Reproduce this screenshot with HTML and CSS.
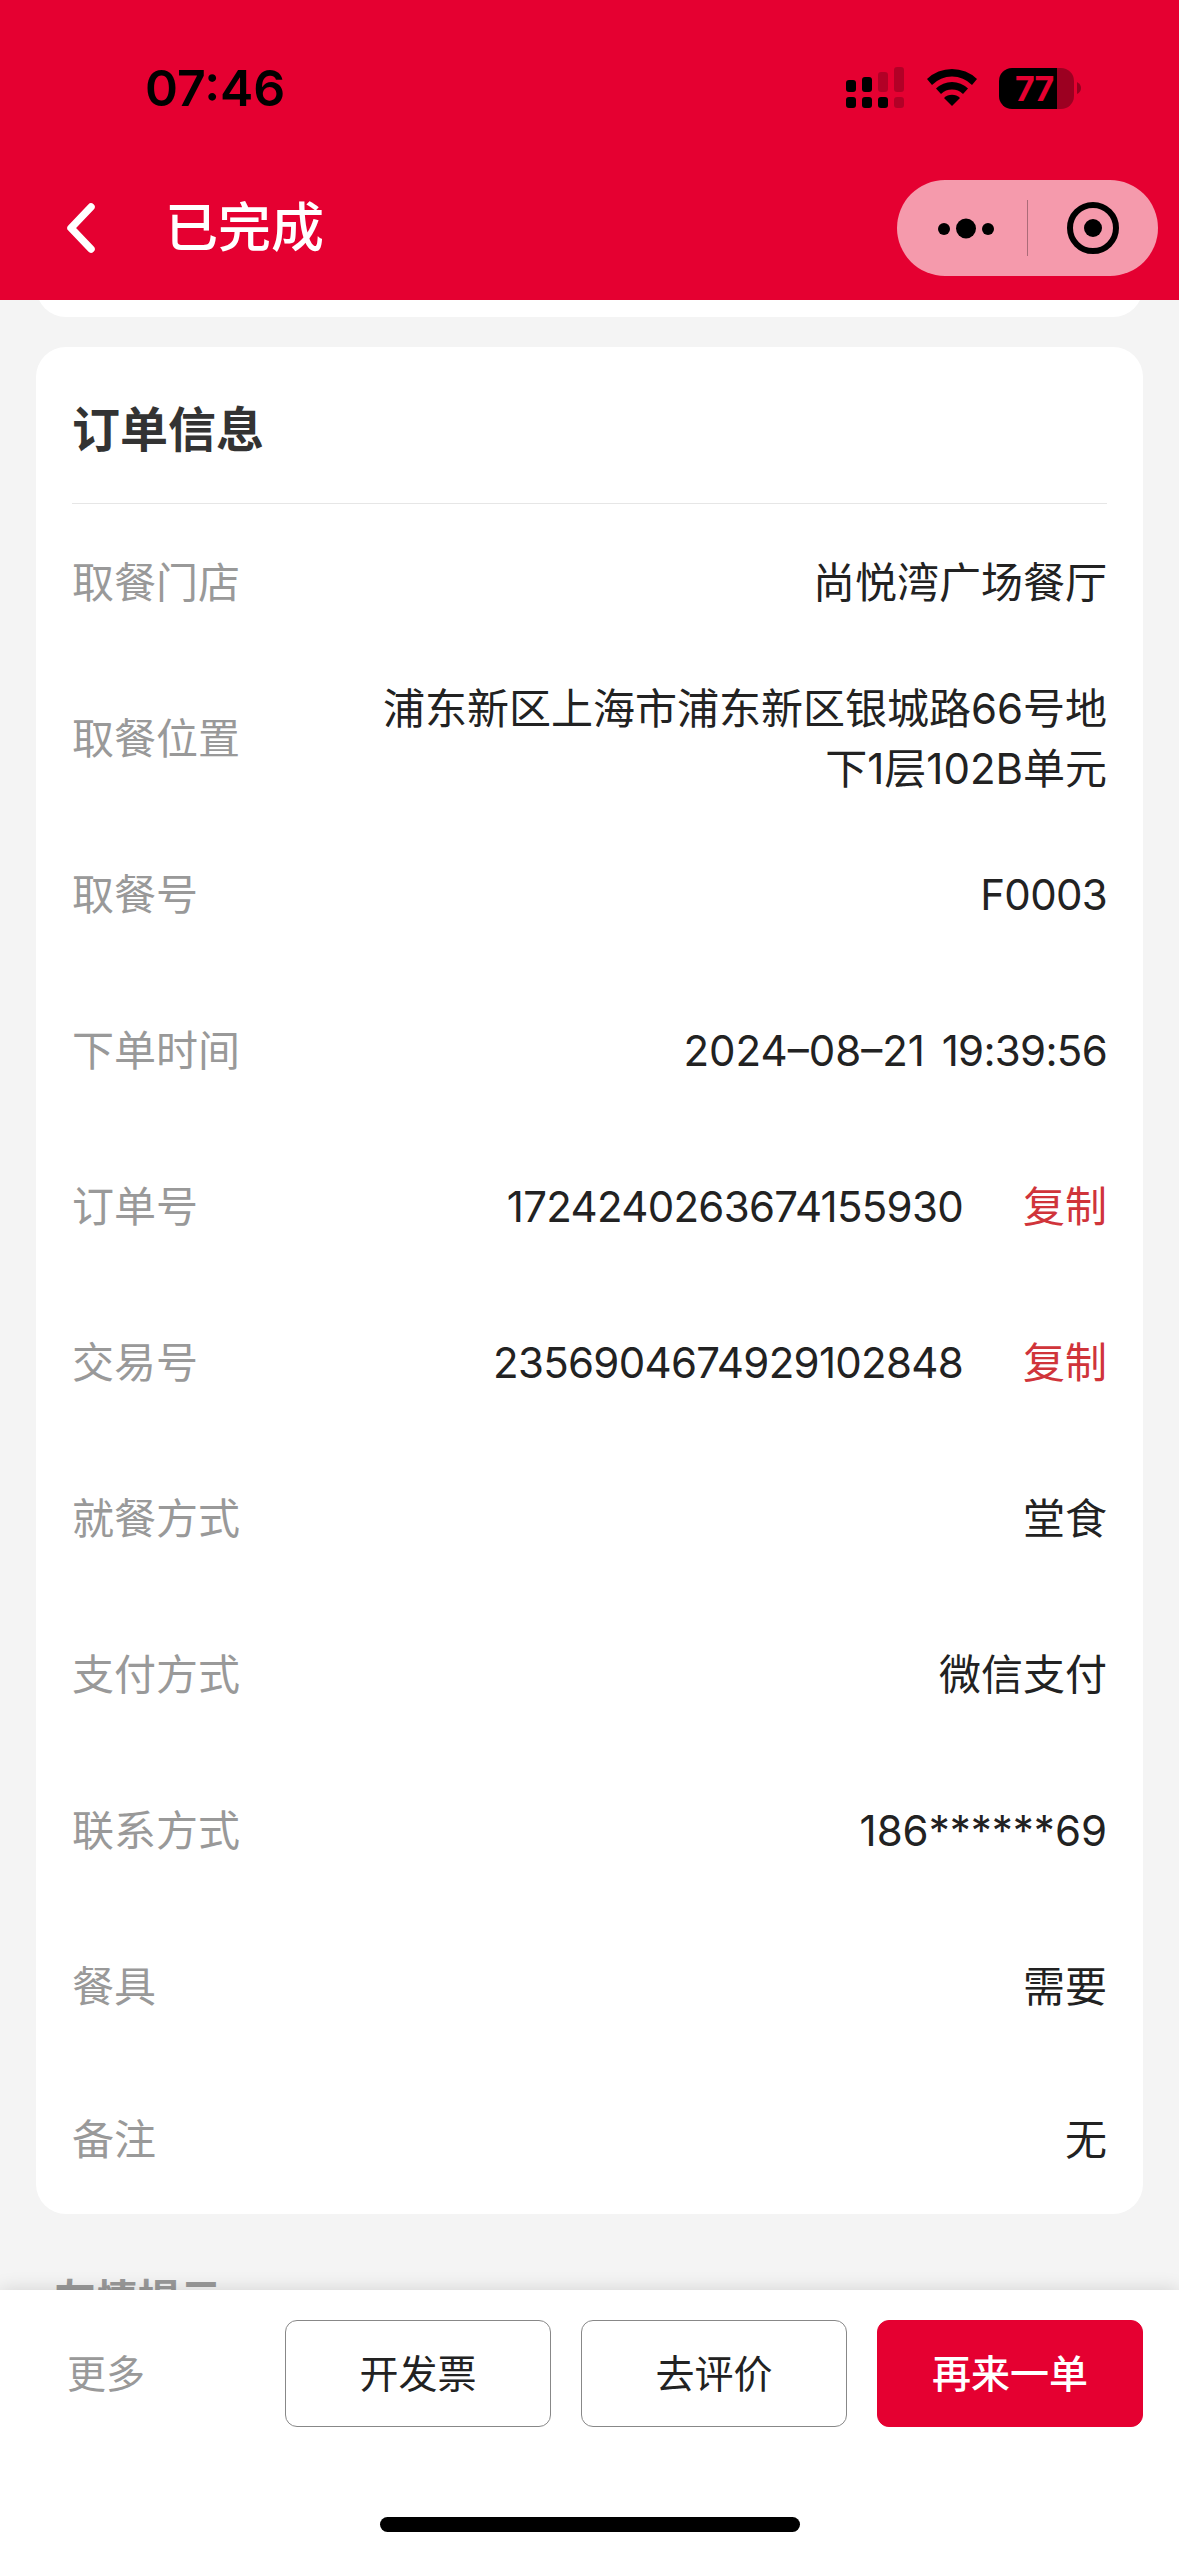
FILE: index.html
```html
<!DOCTYPE html>
<html lang="zh-CN">
<head>
<meta charset="utf-8">
<title>已完成</title>
<link rel="stylesheet" href="styles.css">
</head>
<body>
<div class="page">
  <header class="header">
    <div class="statusbar">
      <span class="time">07:46</span>
      <div class="status-icons">
        <svg class="signal" width="58" height="42" viewBox="0 0 58 42">
          <rect x="0" y="13" width="10" height="12" rx="3"/>
          <rect x="16" y="10" width="10" height="15" rx="3"/>
          <rect x="32" y="5" width="10" height="20" rx="3" opacity=".22"/>
          <rect x="48" y="0" width="10" height="25" rx="3" opacity=".22"/>
          <rect x="0" y="30" width="10" height="11" rx="3"/>
          <rect x="16" y="30" width="10" height="11" rx="3"/>
          <rect x="32" y="30" width="10" height="11" rx="3"/>
          <rect x="48" y="30" width="10" height="11" rx="3" opacity=".22"/>
        </svg>
        <svg class="wifi" width="52" height="42" viewBox="0 0 52 42">
          <path d="M1 12 A36 36 0 0 1 51 12 L46 18 A28 28 0 0 0 6 18 Z"/>
          <path d="M10 21.500 A23 23 0 0 1 42 21.500 L37 27 A16 16 0 0 0 15 27 Z"/>
          <path d="M18 31 A11.500 11.500 0 0 1 34 31 L26 39 Z"/>
        </svg>
        <div class="battery">
          <div class="battery-body">77</div>
          <svg width="5" height="14" viewBox="0 0 5 14"><path d="M0 1 Q4 3 4 7 Q4 11 0 13 Z" opacity=".35"/></svg>
        </div>
      </div>
    </div>
    <div class="navbar">
      <svg class="back" width="36" height="60" viewBox="0 0 36 60">
        <path d="M29 9 L9 30 L29 51" fill="none" stroke="#fff" stroke-width="7.500" stroke-linecap="round" stroke-linejoin="round"/>
      </svg>
      <h1 class="title">已完成</h1>
      <div class="capsule">
        <svg width="261" height="96" viewBox="0 0 261 96">
          <circle cx="47" cy="49" r="6"/>
          <circle cx="69" cy="48.500" r="10"/>
          <circle cx="91" cy="49" r="6"/>
          <rect x="130" y="20" width="1" height="56" opacity=".3"/>
          <circle cx="196" cy="48" r="23" fill="none" stroke="#000" stroke-width="6"/>
          <circle cx="196" cy="48" r="9"/>
        </svg>
      </div>
    </div>
  </header>

  <main class="content">
    <div class="card card-prev"></div>
    <section class="card order">
      <h2 class="card-title">订单信息</h2>
      <div class="row"><span class="label">取餐门店</span><span class="value">尚悦湾广场餐厅</span></div>
      <div class="row"><span class="label">取餐位置</span><span class="value">浦东新区上海市浦东新区银城路66号地<br>下1层102B单元</span></div>
      <div class="row"><span class="label">取餐号</span><span class="value num">F0003</span></div>
      <div class="row"><span class="label">下单时间</span><span class="value">2024–08–21 <span class="num clock">19:39:56</span></span></div>
      <div class="row"><span class="label">订单号</span><span class="value num">1724240263674155930</span><a class="copy">复制</a></div>
      <div class="row"><span class="label">交易号</span><span class="value num">2356904674929102848</span><a class="copy">复制</a></div>
      <div class="row"><span class="label">就餐方式</span><span class="value">堂食</span></div>
      <div class="row"><span class="label">支付方式</span><span class="value">微信支付</span></div>
      <div class="row"><span class="label">联系方式</span><span class="value">186******69</span></div>
      <div class="row"><span class="label">餐具</span><span class="value">需要</span></div>
      <div class="row row-last"><span class="label">备注</span><span class="value">无</span></div>
    </section>
    <h3 class="tips">友情提示</h3>
  </main>

  <footer class="footer">
    <div class="actions">
      <span class="more">更多</span>
      <button class="btn">开发票</button>
      <button class="btn">去评价</button>
      <button class="btn btn-primary">再来一单</button>
    </div>
    <div class="home-indicator"></div>
  </footer>
</div>
</body>
</html>
```
FILE: styles.css
```css
* {
    box-sizing: border-box;
}

body {
    margin: 0;
    background: #f4f4f4;
    font-family: Inter, "Noto Sans CJK SC", sans-serif;
    color: #222;
}

.page {
    display: flex;
    flex-direction: column;
    width: 1179px;
    height: 2556px;
    overflow: hidden;
}

/* header */
.header {
    flex: none;
    height: 300px;
    background: #e50031;
}

.statusbar {
    display: flex;
    justify-content: space-between;
    height: 176px;
    padding: 0 97px 0 145px;
}

.time {
    height: 176px;
    line-height: 176px;
    font-size: 50px;
    font-weight: 600;
    color: #000;
}

.status-icons {
    display: flex;
    align-items: center;
    height: 176px;
}

.wifi {
    margin-left: 22px;
}

.battery {
    display: flex;
    align-items: center;
    gap: 3px;
    margin-left: 21px;
}

.battery-body {
    width: 75px;
    height: 41px;
    padding-left: 16px;
    border-radius: 13px;
    background: linear-gradient(to right, #000 58px, #9c0021 58px);
    font-size: 34px;
    font-weight: 700;
    line-height: 41px;
    letter-spacing: -1px;
    color: #e50031;
}

.navbar {
    display: flex;
    align-items: center;
    height: 104px;
    padding: 0 21px 0 62px;
}

.title {
    flex: 1;
    margin: 0 0 0 67px;
    font-size: 53px;
    font-weight: 500;
    line-height: 72px;
    color: #fff;
}

.capsule {
    height: 96px;
    border-radius: 48px;
    background: #f59aac;
}

.capsule svg {
    display: block;
}

/* order info */
.content {
    flex: 1;
    min-height: 0;
    padding: 0 36px;
    overflow: hidden;
}

.card {
    padding: 0 36px;
    border-radius: 30px;
    background: #fff;
}

.card-prev {
    height: 60px;
    margin-top: -43px;
    margin-bottom: 30px;
}

.card-title {
    height: 157px;
    margin: 0;
    border-bottom: 1px solid #e6e6e6;
    font-size: 48px;
    font-weight: 700;
    line-height: 165px;
    color: #333;
}

.row {
    display: flex;
    align-items: center;
    height: 156px;
    padding-top: 2px;
    font-size: 42px;
    line-height: 60px;
}

.row-last {
    height: 150px;
}

.label {
    color: #999;
}

.value {
    flex: 1;
    text-align: right;
    white-space: nowrap;
}

.num {
    letter-spacing: -.7px;
}

.clock {
    margin-left: 5px;
}

.copy {
    margin-left: 60px;
    color: #d0343a;
}

.tips {
    margin: 56px 0 0 18px;
    font-size: 42px;
    font-weight: 700;
    line-height: 60px;
    color: #999;
}

/* bottom bar */
.footer {
    flex: none;
    position: relative;
    height: 266px;
    padding: 30px 36px 0;
    background: #fff;
    box-shadow: 0 0 18px rgba(0, 0, 0, .14);
}

.actions {
    display: flex;
    gap: 30px;
}

.more {
    flex: 1;
    padding-left: 31px;
    font-size: 39px;
    line-height: 107px;
    color: #999;
}

.btn {
    width: 266px;
    height: 107px;
    padding: 0 0 5px;
    border: 1px solid #888;
    border-radius: 12px;
    background: #fff;
    font-family: inherit;
    font-size: 39px;
    color: #222;
}

.btn-primary {
    border-color: #e50031;
    background: #e50031;
    font-weight: 500;
    color: #fff;
}

.home-indicator {
    width: 420px;
    height: 15px;
    margin: 90px auto 0;
    border-radius: 8px;
    background: #000;
}
```
